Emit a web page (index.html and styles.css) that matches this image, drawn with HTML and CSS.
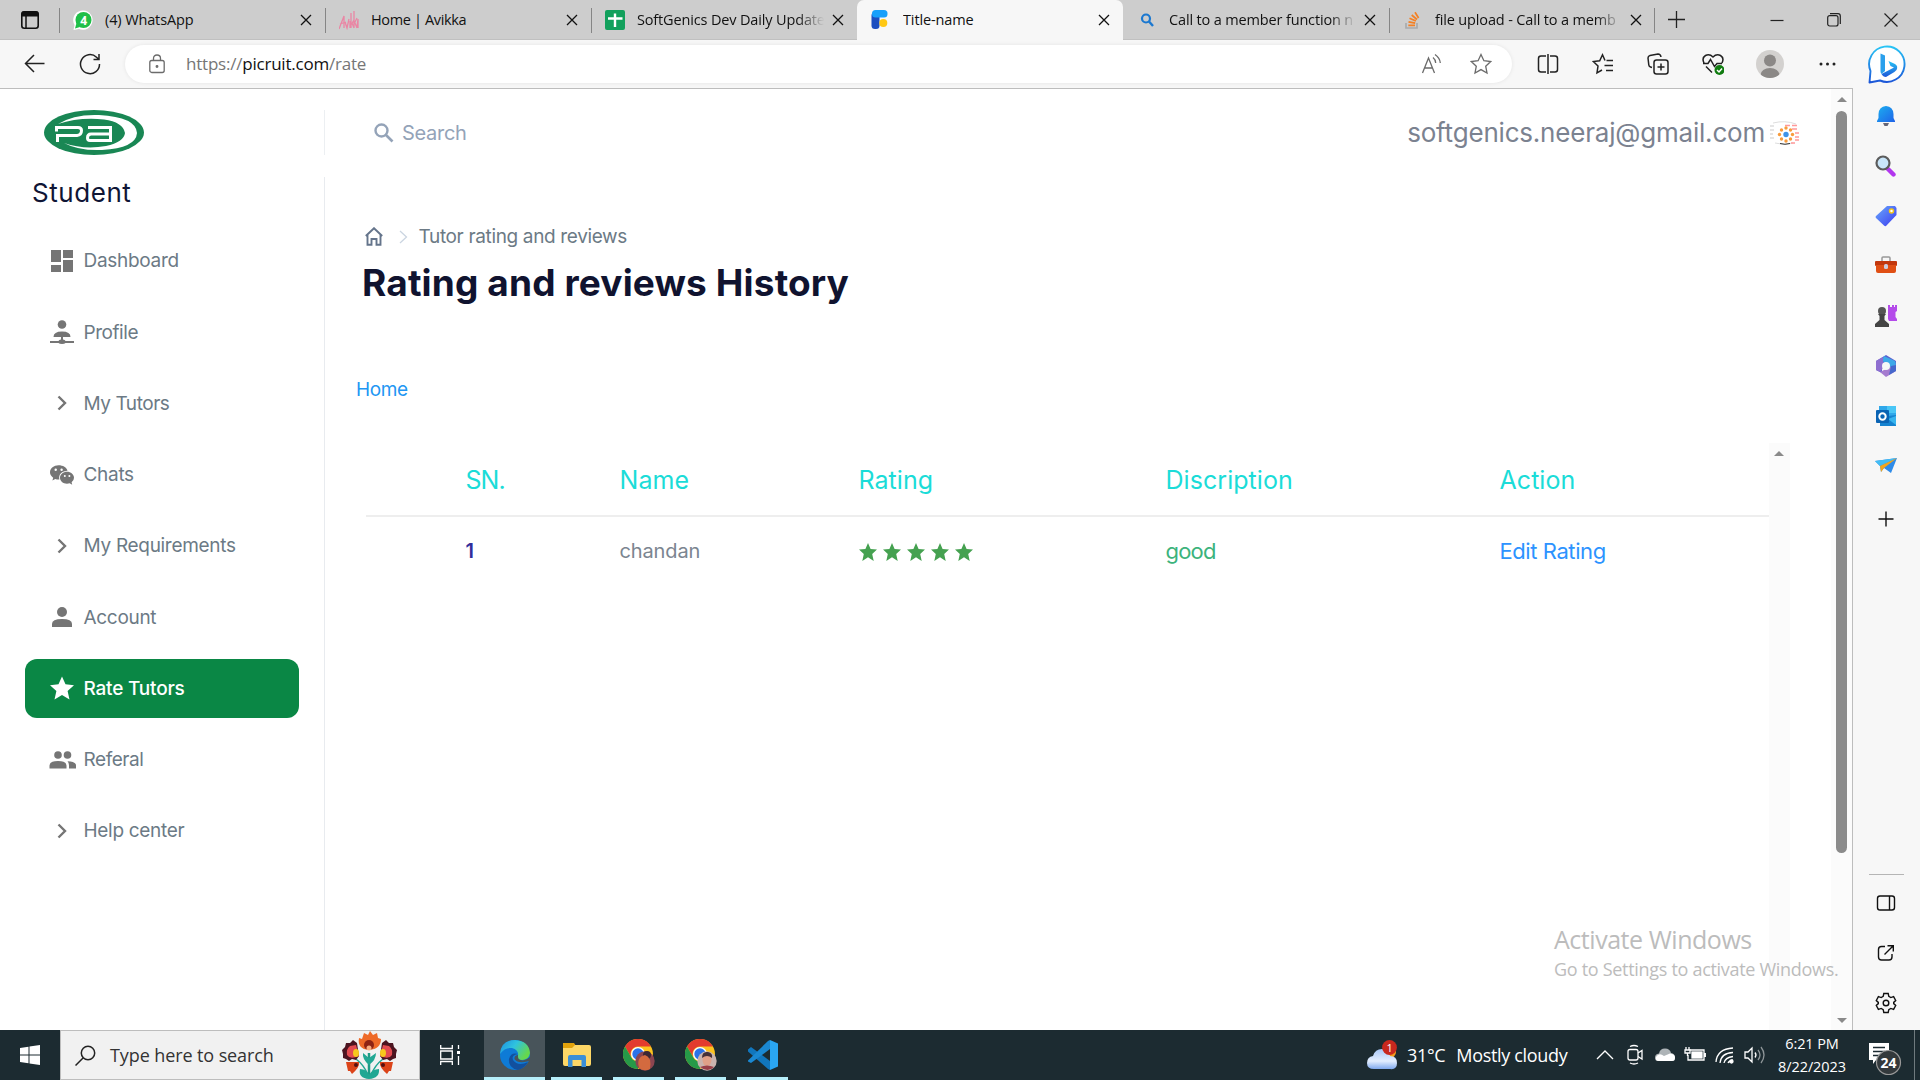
FILE: index.html
```html
<!DOCTYPE html>
<html lang="en">
<head>
<meta charset="utf-8">
<title>Title-name</title>
<link rel="stylesheet" href="styles.css">
</head>
<body>
<div class="desktop">
  <header class="tabs">
    <div class="tab-menu"><svg width="20" height="20" viewBox="0 0 20 20"><rect x="1.8" y="1.8" width="16.4" height="16.4" rx="2.5" fill="none" stroke="#111" stroke-width="1.6"/><path d="M1.5 6.5V3.5Q1.5 1.2 4 1.2H16Q18.5 1.2 18.5 3.5V6.5Z" fill="#111"/><path d="M6 6V18" stroke="#111" stroke-width="1.5"/></svg></div>
    <div class="tab">
      <svg class="favicon" viewBox="0 0 20 20"><path d="M0.500 20L1.500 15A9.700 9.700 0 1 1 6 19Z" fill="#fff"/><circle cx="10.5" cy="10" r="8" fill="#1fbf48"/><path d="M2 18.5L3.5 13L7 17Z" fill="#1fbf48"/><text x="10.5" y="14.500" text-anchor="middle" class="wa-count">4</text></svg>
      <span class="tab-title">(4) WhatsApp</span><svg class="close" viewBox="0 0 12 12"><path d="M1 1L11 11M11 1L1 11"/></svg>
    </div>
    <div class="tab">
      <svg class="favicon" viewBox="0 0 20 20"><path d="M0 19L5 6L5 18M1 14L7 12M6 12L8 18L10 9M11 11V18M12 18V3M12 15L15 10M13 13L15 18M15 18V1M15 14L18 8M16 13L18 18M18 17L19 9V18" fill="none" stroke="#ea86a4" stroke-width="1.3"/></svg>
      <span class="tab-title tight">Home | Avikka</span><svg class="close" viewBox="0 0 12 12"><path d="M1 1L11 11M11 1L1 11"/></svg>
    </div>
    <div class="tab">
      <svg class="favicon" viewBox="0 0 20 20"><rect width="20" height="20" rx="2" fill="#12a05c"/><path d="M10 3.5V17M3 8.5H17.5" stroke="#fff" stroke-width="2.4"/></svg>
      <span class="tab-title fade">SoftGenics Dev Daily Update</span><svg class="close" viewBox="0 0 12 12"><path d="M1 1L11 11M11 1L1 11"/></svg>
    </div>
    <div class="tab active">
      <svg class="favicon" viewBox="0 0 20 20"><rect x="0.5" y="2" width="8" height="17" rx="3.5" fill="#1d4fc0"/><rect x="1" y="0" width="15.5" height="7.5" rx="3.5" fill="#18a0fb"/><circle cx="12.3" cy="13" r="4" fill="#ffc814"/></svg>
      <span class="tab-title">Title-name</span><svg class="close" viewBox="0 0 12 12"><path d="M1 1L11 11M11 1L1 11"/></svg>
    </div>
    <div class="tab">
      <svg class="favicon" viewBox="0 0 20 20"><circle cx="9" cy="8.5" r="4" fill="none" stroke="#1b78d0" stroke-width="2.2"/><path d="M12 11.5L16 16" stroke="#1b78d0" stroke-width="2.4"/></svg>
      <span class="tab-title fade">Call to a member function n</span><svg class="close" viewBox="0 0 12 12"><path d="M1 1L11 11M11 1L1 11"/></svg>
    </div>
    <div class="tab last">
      <svg class="favicon" viewBox="0 0 20 20"><path d="M3 13V18H14V13" fill="none" stroke="#a9abad" stroke-width="1.7"/><path d="M5.3 15.3H12M5.5 11.8L12.2 13.2M6.5 8.2L12.9 11M8.7 5L14 9.5M12 2.2L15.6 8" stroke="#f48024" stroke-width="1.7"/></svg>
      <span class="tab-title fade">file upload - Call to a memb</span><svg class="close" viewBox="0 0 12 12"><path d="M1 1L11 11M11 1L1 11"/></svg>
    </div>
    <svg class="new-tab" viewBox="0 0 17 17"><path d="M8.5 0V17M0 8.5H17"/></svg>
    <div class="window-controls">
      <svg viewBox="0 0 14 14"><path d="M0.5 7.5H13.5"/></svg>
      <svg viewBox="0 0 14 14"><rect x="0.7" y="2.7" width="10.3" height="10.3" rx="2"/><path d="M3 0.7H11Q13.3 0.7 13.3 3V11"/></svg>
      <svg viewBox="0 0 14 14"><path d="M0.5 0.5L13.5 13.5M13.5 0.5L0.5 13.5"/></svg>
    </div>
  </header>

  <div class="toolbar">
    <div class="nav-btn"><svg width="22" height="20" viewBox="0 0 22 20"><path d="M21.500 9.5H2.500M11 1L2.500 9.5L11 18"/></svg></div>
    <div class="nav-btn"><svg width="22" height="22" viewBox="0 0 22 22"><path d="M20.5 11A9.5 9.5 0 1 1 17.5 4.2L19.5 6M20 1V6.5H14.5"/></svg></div>
    <div class="address">
      <svg class="lock" width="18" height="20" viewBox="0 0 18 20"><rect x="1.8" y="6.5" width="14.4" height="12" rx="2"/><path d="M5.5 6.5V4.5Q5.5 1 9 1T12.5 4.5V6.5"/><circle cx="9" cy="12.5" r="0.8"/></svg>
      <span class="url">https://<b>picruit.com</b>/rate</span>
      <div class="field-icon"><svg width="22" height="22" viewBox="0 0 22 22"><path d="M2.500 20L8.500 5L14.500 20M4.500 15H12.500M13 4.5Q15.500 6.5 15.700 10M15 1.5Q20 5 20.300 10"/></svg></div>
      <div class="field-icon"><svg width="22" height="22" viewBox="0 0 22 22"><path d="M11 1.5L13.9 7.7L20.7 8.5L15.7 13.2L17 20L11 16.6L5 20L6.3 13.2L1.3 8.5L8.1 7.7Z"/></svg></div>
    </div>
    <div class="tools">
      <div><svg viewBox="0 0 22 22"><path d="M9 3H4Q1.5 3 1.5 5.5V16.5Q1.5 19 4 19H9M13 3H18Q20.5 3 20.5 5.5V16.5Q20.5 19 18 19H13M11 1V21"/></svg></div>
      <div><svg viewBox="0 0 22 22"><path d="M13 7.5L10.5 1.8L7.7 7.7L1.3 8.5L6 13L5 19.8L10 17M14.5 7.5H21M12.5 12.5H21M14 17.5H21"/></svg></div>
      <div><svg viewBox="0 0 22 22"><path d="M5 14.5L3.5 14Q2 13.5 1.8 12L1 5Q1 3 3 2.5L11 1Q13.5 1 14 4"/><rect x="7" y="7" width="14" height="14" rx="2.5"/><path d="M14 10.5V17.5M10.5 14H17.5"/></svg></div>
      <div><svg viewBox="0 0 22 22"><path d="M2 10Q-0.5 5 3.5 2.5Q7.5 0.5 11 4Q14.5 0.5 18.5 2.5Q22.5 5 20 10M1 10.5H6L8.5 6.5L12.5 13.5L15 10.5H20M4 13.5L10 19.5"/><circle cx="17.5" cy="17" r="5" class="ok"/><path class="tick" d="M15 17L17 19L20 15.5"/></svg></div>
      <div class="wide"><svg class="person" viewBox="0 0 28 28"><clipPath id="pc"><circle cx="14" cy="14" r="14"/></clipPath><g clip-path="url(#pc)"><rect width="28" height="28" fill="#d3d1cf"/><circle cx="14" cy="10.5" r="6" fill="#8b8886"/><ellipse cx="14" cy="25" rx="9.5" ry="7" fill="#8b8886"/></g></svg></div>
      <div><svg viewBox="0 0 22 22"><g fill="#222" stroke="none"><circle cx="4" cy="11" r="1.5"/><circle cx="10.500" cy="11" r="1.5"/><circle cx="17" cy="11" r="1.5"/></g></svg></div>
      <div class="bing-slot"><svg class="bing" viewBox="0 0 40 40"><defs><linearGradient id="bg" x1="0" y1="0" x2="0" y2="1"><stop offset="0" stop-color="#28c4f5"/><stop offset="1" stop-color="#1c56d8"/></linearGradient></defs><path d="M2.500 38.500L3.500 27A17.700 17.700 0 1 1 13 36.500Z" fill="#fff" stroke="url(#bg)" stroke-width="1.9" stroke-linejoin="round"/><path d="M13.500 9.500L18 11.500V27L14.500 30Q13.500 29 13.500 27Z" fill="#2aa0ec"/><path d="M14.500 30L27 23.500L23.500 22L21.500 17L28 20Q31.500 22 29.500 26Q28 28 24 30L19 33Q16 33 14.500 30Z" fill="url(#bg)"/></svg></div>
    </div>
  </div>

  <div class="middle">
    <div class="page">
      <aside class="side">
        <div class="brand">
          <svg width="100" height="45" viewBox="0 0 100 45"><ellipse cx="50" cy="22.5" rx="50" ry="22.5" fill="#198754"/><path d="M14 14Q30 4 55 5Q92 7 93 23Q92 38 58 40Q35 41 20 33Q40 40 62 36Q80 32 81 23Q79 12 60 9.500Q35 7 14 14Z" fill="#fff"/><g fill="none" stroke="#fff" stroke-width="3"><path d="M12.500 21.500V17.500H34Q37.500 17.500 37.500 20.500Q37.500 25 33 25.500H13.500V32"/><path d="M44 17.500H66.500V30.500H46Q43.500 30.500 43.500 28Q43.500 24 47 24H66"/></g></svg>
        </div>
        <div class="menu-wrap">
          <h2 class="role">Student</h2>
          <nav class="menu">
            <a><svg viewBox="0 0 24 24"><path d="M1 1h10v12H1zM13 1h10v8H13zM13 11h10v12H13zM1 16h10v7H1z"/></svg><span>Dashboard</span></a>
            <a><svg viewBox="0 0 24 24"><circle cx="12" cy="4.5" r="4.3"/><path d="M3.5 17Q3.5 11.5 12 11.5T20.5 17ZM0 21H8.5Q9 19.5 11 19.5V17H13V19.5Q15 19.5 15.5 21H24V23H15.5Q14.5 24 12 24T8.500 23H0Z"/></svg><span class="tight">Profile</span></a>
            <a><svg viewBox="0 0 24 24"><path class="chev" d="M8.500 5.500L15 12L8.500 18.500"/></svg><span class="tight">My Tutors</span></a>
            <a><svg viewBox="0 0 24 24"><path d="M8.500 2.300C4 2.300 0 5.300 0 9.300 0 11.600 1.300 13.400 3.200 14.700L2.400 17.500L5.300 16Q7.300 16.700 9.400 16.500C8.200 11.500 12 7.800 17.500 7.800 16.700 4.500 13 2.300 8.500 2.300Z"/><path d="M24 14.800C24 11.500 20.800 8.800 17 8.800S10 11.500 10 14.800 13 20.700 17 20.700Q18.500 20.700 19.700 20.300L22.200 21.700L21.600 19.300Q24 17.500 24 14.800Z"/><g fill="#fff"><circle cx="5.700" cy="6.800" r="1.200"/><circle cx="11.600" cy="6.800" r="1.200"/><circle cx="14.800" cy="13" r="1"/><circle cx="19.400" cy="13" r="1"/></g></svg><span>Chats</span></a>
            <a><svg viewBox="0 0 24 24"><path class="chev" d="M8.500 5.500L15 12L8.500 18.500"/></svg><span>My Requirements</span></a>
            <a><svg viewBox="0 0 24 24"><circle cx="12" cy="7" r="5"/><path d="M2 22V19Q2 14 12 14T22 19V22Z"/></svg><span>Account</span></a>
            <a class="current"><svg viewBox="0 0 24 24"><path d="M12 0.500L15.500 8.300L24 9.200L17.600 14.900L19.500 23.500L12 19L4.500 23.500L6.400 14.900L0 9.200L8.500 8.300Z"/></svg><span>Rate Tutors</span></a>
            <a><svg class="big" viewBox="0 0 27 24"><circle cx="9" cy="7" r="3.800"/><circle cx="18.500" cy="7" r="3.800"/><path d="M0.500 20.500V17.500Q0.500 13 9 13T17.500 17.500V20.500ZM18.500 13.200Q27 13.500 27 17.500V20.500H20V17.500Q20 15 18.500 13.200Z"/></svg><span class="tight">Referal</span></a>
            <a><svg viewBox="0 0 24 24"><path class="chev" d="M8.500 5.500L15 12L8.500 18.500"/></svg><span>Help center</span></a>
          </nav>
        </div>
      </aside>
      <main class="content">
        <div class="topbar">
          <svg class="search-icon" viewBox="0 0 20 20"><circle cx="7.500" cy="7.500" r="6" fill="none" stroke="#94a3b8" stroke-width="2.400"/><path d="M12 12L18.500 18.500" stroke="#94a3b8" stroke-width="2.600"/></svg>
          <span class="search">Search</span>
          <span class="email">softgenics.neeraj@gmail.com</span>
          <svg class="avatar" viewBox="0 0 35 24"><path d="M4 2Q16-1 27 3M6 22Q16 25 24 22" fill="none" stroke="#ddd" stroke-width="1"/><path d="M11 22.500Q16 24 21 22.500" stroke="#333" fill="none"/><path d="M1 5h4M1 9h4M1 13h3M1 17h4" stroke="#ddd" stroke-width="1.500"/><path d="M16 4.500h5M23 4.500h5M23 8h5M26 12h4M26 16h4M26 19h4M22 22h4" stroke="#f99" stroke-width="1.700"/><g fill="#f89b3c"><circle cx="17" cy="7" r="1.700"/><circle cx="21.500" cy="9" r="1.700"/><circle cx="23.500" cy="13.500" r="1.700"/><circle cx="21.500" cy="18" r="1.700"/><circle cx="17" cy="20" r="1.700"/><circle cx="12.500" cy="18" r="1.700"/><circle cx="10.500" cy="13.500" r="1.700"/><circle cx="12.500" cy="9" r="1.700"/></g><circle cx="17" cy="13.500" r="2.700" fill="#3f93e8"/></svg>
        </div>
        <div class="crumbs">
          <svg width="18" height="19" viewBox="0 0 18 19"><path d="M0.800 9L9 1.200L17.200 9M2.500 8V17.800H6.500V12H11.500V17.800H15.500V8" fill="none" stroke="#64748b" stroke-width="1.900"/></svg>
          <svg width="9" height="14" viewBox="0 0 9 14"><path d="M1 1L7.500 7L1 13" fill="none" stroke="#cbd5e1" stroke-width="1.300"/></svg>
          <span>Tutor rating and reviews</span>
        </div>
        <h1>Rating and reviews History</h1>
        <a class="home-link">Home</a>
        <div class="table-wrap">
          <div class="table">
            <div class="row head"><span class="col-sn">SN.</span><span>Name</span><span>Rating</span><span>Discription</span><span>Action</span></div>
            <div class="row"><span class="sn">1</span><span class="name">chandan</span><span class="stars"><svg viewBox="0 0 18 18"><path d="M9 0L11.600 6L18 6.600L13.200 11L14.700 18L9 14.300L3.300 18L4.800 11L0 6.600L6.400 6Z"/></svg><svg viewBox="0 0 18 18"><path d="M9 0L11.600 6L18 6.600L13.200 11L14.700 18L9 14.300L3.300 18L4.800 11L0 6.600L6.400 6Z"/></svg><svg viewBox="0 0 18 18"><path d="M9 0L11.600 6L18 6.600L13.200 11L14.700 18L9 14.300L3.300 18L4.800 11L0 6.600L6.400 6Z"/></svg><svg viewBox="0 0 18 18"><path d="M9 0L11.600 6L18 6.600L13.200 11L14.700 18L9 14.300L3.300 18L4.800 11L0 6.600L6.400 6Z"/></svg><svg viewBox="0 0 18 18"><path d="M9 0L11.600 6L18 6.600L13.200 11L14.700 18L9 14.300L3.300 18L4.800 11L0 6.600L6.400 6Z"/></svg></span><span class="good">good</span><span class="edit">Edit Rating</span></div>
          </div>
          <div class="inner-scroll"><i class="up"></i></div>
        </div>
      </main>
      <div class="scrollbar"><i class="up"></i><div class="thumb"></div><i class="down"></i></div>
      <div class="watermark"><p class="wm-title">Activate Windows</p><p class="wm-sub">Go to Settings to activate Windows.</p></div>
    </div>
    <aside class="edge-side">
      <div class="apps">
        <svg viewBox="0 0 22 22"><defs><linearGradient id="bl" x1="0" y1="0" x2="1" y2="1"><stop offset="0" stop-color="#1cb0f0"/><stop offset="1" stop-color="#1f62e8"/></linearGradient></defs><path d="M11 1Q18 1.500 18.500 9V13L20 16V17H2V16L3.500 13V9Q4 1.500 11 1Z" fill="url(#bl)"/><path d="M8 18H14L12.500 21H9.500Z" fill="#667"/></svg>
        <svg viewBox="0 0 22 22"><path d="M13 14L18.500 19.500" stroke="#b236ee" stroke-width="4.400" stroke-linecap="round"/><circle cx="8" cy="8" r="6.500" fill="#c9e6fa" stroke="#5c5c5c" stroke-width="2.200"/></svg>
        <svg viewBox="0 0 22 22"><defs><linearGradient id="tg" x1="0" y1="0" x2="1" y2="1"><stop offset="0" stop-color="#68a9fb"/><stop offset="1" stop-color="#3d3bf0"/></linearGradient></defs><path d="M12 1H20L21.500 3V10L11 21Q10 21.500 9 20.500L1 13Q0 12 1 11Z" fill="url(#tg)"/><circle cx="16.500" cy="6" r="2" fill="#fff" stroke="#f5c518" stroke-width="1.500"/></svg>
        <svg viewBox="0 0 22 22"><path d="M7 6V3Q7 2 8 2H14Q15 2 15 3V6" fill="none" stroke="#999" stroke-width="1.500"/><rect x="0" y="6" width="22" height="5" rx="1" fill="#c2370d"/><path d="M1 10H21V16Q21 18 19 18H3Q1 18 1 16Z" fill="#e04f14"/><rect x="9" y="9" width="4" height="5" rx="1.500" fill="#ccd"/></svg>
        <svg viewBox="0 0 22 22"><path d="M13 0H15V2H17V0H19V2H20V0H22V6L20.500 7V12L22 14V16H14L13 14Z" fill="#b44bea"/><circle cx="7" cy="6" r="4" fill="#555"/><path d="M3 9H11L9.500 11V15L14 19V22H0V19L4.500 15V11Z" fill="#444"/></svg>
        <svg viewBox="0 0 22 22"><path d="M11 0L21 6V10H14L11 7L7 10V18L1 15V6Z" fill="#5b62cf"/><path d="M9 1L20 6Q21 8 21 11L14 13V9L7 6Z" fill="#3ea9e8"/><path d="M1 6L8 2V13L5 17L1 15Z" fill="#8f6fd0"/><path d="M5 17L15 12L21 10V16L11 22Z" fill="#a57bcf"/><path d="M16 11L21 10V16L14 20Z" fill="#4668cc"/><circle cx="11" cy="11" r="4" fill="#f7f7f7"/></svg>
        <svg viewBox="0 0 22 22"><rect x="4" y="1" width="17" height="12" fill="#2fa8ea"/><rect x="12" y="1" width="9" height="7" fill="#49c6f6"/><path d="M5 12L21 10V21H5Z" fill="#1583d0"/><path d="M13 14L21 20V11Z" fill="#36b4ee"/><rect x="1" y="5" width="13" height="13" rx="1" fill="#0a64b4"/><circle cx="7.500" cy="11.500" r="3.200" fill="none" stroke="#fff" stroke-width="2"/></svg>
        <svg viewBox="0 0 22 22"><path d="M0 6L22 3L16 18L9 13L6 17L5 11Z" fill="#2f8be8"/><path d="M0 6L22 3L5 11Z" fill="#42bdf4"/><path d="M22 3L9 13L6 17L5 11Z" fill="#f3a51b"/></svg>
      </div>
      <svg class="plus" viewBox="0 0 16 16"><path d="M8 0.500V15.500M0.500 8H15.500"/></svg>
      <div class="side-tools">
        <svg viewBox="0 0 22 22"><rect x="2.500" y="4" width="17" height="14" rx="2.500"/><path d="M14.500 4V18"/></svg>
        <svg viewBox="0 0 22 22"><path d="M10 4.500H6.500Q3.500 4.500 3.500 7.500V15Q3.500 18 6.500 18H14Q17 18 17 15V12M9.500 12.500L18 4M12.500 3.700H18.300V9.500"/></svg>
        <svg viewBox="0 0 22 22"><path d="M8.800 1.500H13.200L13.800 4.400L15.800 5.600L18.600 4.700L20.700 8.500L18.700 10.400V11.600L20.700 13.500L18.600 17.300L15.800 16.400L13.800 17.600L13.200 20.500H8.800L8.200 17.600L6.200 16.400L3.400 17.300L1.300 13.500L3.300 11.600V10.400L1.300 8.500L3.400 4.700L6.200 5.600L8.200 4.400Z"/><circle cx="11" cy="11" r="2.800"/></svg>
      </div>
    </aside>
  </div>

  <footer class="taskbar">
    <div class="start"><svg width="20" height="20" viewBox="0 0 20 20"><path d="M0 3L8.500 1.700V9.500H0ZM9.500 1.500L20 0V9.500H9.500ZM0 10.500H8.500V18.300L0 17ZM9.500 10.500H20V20L9.500 18.500Z" fill="#fff"/></svg></div>
    <div class="find">
      <svg width="21" height="21" viewBox="0 0 21 21"><circle cx="13" cy="8" r="6.700" fill="none" stroke="#222" stroke-width="1.500"/><path d="M8.300 12.700L0.500 20.500" stroke="#222" stroke-width="1.500"/></svg>
      <span>Type here to search</span>
      <svg class="flower" viewBox="0 0 55 48"><path d="M27 22V47" stroke="#1f9b86" stroke-width="2.500"/><path d="M27 48Q16 47 18 38Q25 38 27 44Q30 38 37 38Q38 47 27 48ZM27 34Q20 28 21 22L27 27L34 22Q34 29 27 34Z" fill="#21a793"/><path d="M14 28Q22 34 26 44M41 28Q33 34 29 44" fill="none" stroke="#21a793" stroke-width="1.500"/><path d="M27 19Q15 18 17 7L20 8L22 2L26 4L28 0L31 4L35 2L36 7L39 8Q39 18 27 19Z" fill="#ee6a28"/><circle cx="27" cy="14" r="5" fill="#8e2414"/><circle cx="27" cy="17" r="2.500" fill="#f7ad80"/><path d="M17 25L14 29L10 28L7 30L4 28L1 27L1 23L0 19L3 16L4 12L8 12L11 9L15 12ZM38 25L41 29L45 28L48 30L51 28L54 27L54 23L55 19L52 16L51 12L47 12L44 9L40 12Z" fill="#4c1420"/><path d="M17 25Q8 29 5 24Q4 18 8 15L14 14ZM38 25Q47 29 50 24Q51 18 47 15L41 14Z" fill="#e44b50"/><ellipse cx="14" cy="22" rx="3" ry="4" fill="#f8c81c"/><ellipse cx="41" cy="22" rx="3" ry="4" fill="#f8c81c"/><path d="M4 31L17 31Q18 36 10 43L8 40L6 40ZM51 31L38 31Q37 36 45 43L47 40L49 40Z" fill="#dc4419"/><circle cx="14" cy="34" r="2" fill="#511"/><circle cx="41" cy="34" r="2" fill="#511"/></svg>
    </div>
    <div class="task-view"><svg width="20" height="20" viewBox="0 0 20 20"><path d="M0.700 0V3.500H12.300V0M0.700 6H12.300V14H0.700ZM0.700 20V16.500H12.300V20M18.500 0V4M18.500 11V20" fill="none" stroke="#fff" stroke-width="1.300"/><rect x="17" y="6" width="3" height="3" fill="#fff"/></svg></div>
    <div class="apps-row">
      <div class="app focus"><svg width="30" height="30" viewBox="0 0 30 30"><defs><linearGradient id="eg" x1="0" y1="0" x2="1" y2="0.500"><stop offset="0" stop-color="#1d8ee0"/><stop offset="0.500" stop-color="#2fc3df"/><stop offset="1" stop-color="#66d84c"/></linearGradient></defs><circle cx="15" cy="15" r="15" fill="#0e7bd6"/><path d="M0 14Q1 0 15 0Q29 1 30 13Q29 20 22 20Q16 20 18 16Q19 10 12 8Q5 7 0 14Z" fill="url(#eg)"/><path d="M18 14Q11 15 13 20Q18 27 28 22Q25 28 18 30Q8 28 9 19Q11 12 18 14Z" fill="#12509e"/><path d="M18 15Q17 20 23 20.500Q27 20 30 17V21L27 21.500Q18 24 14.500 19Q14 15.500 18 15Z" fill="#48545a"/></svg></div>
      <div class="app"><svg width="28" height="24" viewBox="0 0 28 24"><path d="M0 0H11L13 3H24V8H0Z" fill="#e2a20b"/><path d="M0 5H9L12 2H26Q28 2 28 4V21Q28 23 26 23H2Q0 23 0 21Z" fill="#fdd766"/><path d="M5 24V14Q5 12 7 12H21Q23 12 23 14V24H18.500V17H9.500V24Z" fill="#3c8fd6"/></svg></div>
      <div class="app"><svg width="33" height="33" viewBox="0 0 33 33"><circle cx="15" cy="15" r="15" fill="#fcc31e"/><path d="M2 7.500A15 15 0 0 1 28 7.500H15A7.500 7.500 0 0 0 8.500 18.700Z" fill="#e33b2e"/><path d="M2 7.500L8.500 18.700A7.500 7.500 0 0 0 15 22.500L15 30A15 15 0 0 1 2 7.500Z" fill="#269a48"/><circle cx="15" cy="15" r="7" fill="#fff"/><circle cx="15" cy="15" r="5.700" fill="#2b73e8"/><circle cx="22" cy="22" r="9.700" fill="#8b4550"/><circle cx="24" cy="16" r="4" fill="#3b2735"/><path d="M16 29Q13 18 22 16Q29 18 27 30Q21 33 16 29Z" fill="#d36a3f"/></svg></div>
      <div class="app"><svg width="33" height="33" viewBox="0 0 33 33"><circle cx="15" cy="15" r="15" fill="#fcc31e"/><path d="M2 7.500A15 15 0 0 1 28 7.500H15A7.500 7.500 0 0 0 8.500 18.700Z" fill="#e33b2e"/><path d="M2 7.500L8.500 18.700A7.500 7.500 0 0 0 15 22.500L15 30A15 15 0 0 1 2 7.500Z" fill="#269a48"/><circle cx="15" cy="15" r="7" fill="#fff"/><circle cx="15" cy="15" r="5.700" fill="#2b73e8"/><circle cx="22" cy="22" r="9.700" fill="#c9b3ae"/><ellipse cx="22" cy="21" rx="4.500" ry="6" fill="#e0a088"/><path d="M17 19Q17 12 23 13Q28 14 27 19Q22 15 17 19Z" fill="#443039"/><path d="M15 28Q22 25 29 28Q23 34 15 28Z" fill="#9a3f48"/></svg></div>
      <div class="app"><svg width="30" height="30" viewBox="0 0 30 30"><path d="M0 9.500L3 7L22 21V30L20 29L0 11.500Z" fill="#1176bd"/><path d="M0 20.500L20 1L22 0V9L3 23L0 21.500Z" fill="#1a88d2"/><path d="M22 0L30 3.500V26.500L22 30Z" fill="#2aa6f2"/></svg></div>
    </div>
    <div class="weather">
      <svg width="30" height="30" viewBox="0 0 30 30"><defs><linearGradient id="cg" x1="0" y1="0" x2="0" y2="1"><stop offset="0" stop-color="#a9c8f8"/><stop offset="0.600" stop-color="#e3eeff"/><stop offset="1" stop-color="#7ea8ee"/></linearGradient></defs><circle cx="23" cy="12" r="6" fill="#f59b1a"/><path d="M7 29Q0 29 0 23T6 16Q8 9 15 9T23 16Q30 16 30 23T23 29Z" fill="url(#cg)"/><circle cx="22.500" cy="7.500" r="7.400" fill="#c8281e"/><text x="22.500" y="12" text-anchor="middle" class="alert">1</text></svg>
      <span class="temp">31°C</span><span>Mostly cloudy</span>
    </div>
    <div class="tray">
      <svg viewBox="0 0 22 22"><path d="M3 15L11 7L19 15"/></svg>
      <svg viewBox="0 0 22 22"><rect x="4" y="5.500" width="10" height="10.500" rx="2"/><path d="M14 9L18 6.500V15L14 12.500M6 2.500Q10 0.500 14 2.500M6 19Q10 21 14 19"/></svg>
      <svg viewBox="0 0 22 22"><path d="M4 17Q1 17 1 13.500T5 9.500Q6 4.500 11 4.500T17 9Q21 9.500 21 13.500T18 17Z" fill="#aeb4b7" stroke="none"/><path d="M4 17Q1 16 2 13Q5 8 10 12L16 9.500Q21 10 21 13.500T18 17Z" fill="#fff" stroke="none"/></svg>
      <svg viewBox="0 0 22 22"><path d="M6 6H20V16H4V11M21.300 9V13"/><rect x="8" y="8" width="10" height="6" fill="#fff"/><path d="M2 3V6M5 3V6M1 6H6V9H1ZM3.500 9V12"/></svg>
      <svg viewBox="0 0 22 22"><path d="M2 18Q3 5 19 4M6 19Q7 9 19 8.500M10 19Q11 13.500 19 12.500M14 19Q15 17 19 16"/><circle cx="17.500" cy="17.500" r="1.500" fill="#fff"/></svg>
      <svg viewBox="0 0 22 22"><path d="M1 8H4L8 4V18L4 14H1ZM11 8.500Q13 11 11 13.500"/><path d="M14 6Q18 11 14 16M17 3Q23 11 17 19" opacity=".5"/></svg>
    </div>
    <div class="clock"><span>6:21 PM</span><span>8/22/2023</span></div>
    <div class="notif"><svg width="34" height="34" viewBox="0 0 34 34"><path d="M1 1H21V18H8L5 22V18H1Z" fill="#fff"/><path d="M5 5.500H17M5 9.500H17M5 13.500H11" stroke="#1c2b31" stroke-width="1.300"/><circle cx="20.500" cy="20.500" r="12" fill="#33393c" stroke="#999" stroke-width="1.200"/><text x="20.500" y="26" text-anchor="middle" class="badge">24</text></svg></div>
    <div class="show-desktop"></div>
  </footer>
</div>
</body>
</html>
```
FILE: styles.css
```css
* { box-sizing: border-box; }
body { margin: 0; overflow: hidden; font-family: "Open Sans", "Noto Sans", sans-serif; color: #111; }
h1, h2, p { margin: 0; font-weight: 400; }
i { font-style: normal; }
span { white-space: nowrap; }
svg { display: block; flex: none; }
.desktop { width: 1920px; height: 1080px; display: flex; flex-direction: column; background: #fff; }

/* tab strip */
.tabs { height: 40px; display: flex; align-items: center; background: #cdcdcd; border-bottom: 1px solid #c0c0c0; font-size: 14.5px; letter-spacing: -0.12px; }
.tab-menu { width: 59px; padding-left: 20px; }
.tab { width: 266px; height: 40px; display: flex; align-items: center; padding: 0 13px 0 14px; position: relative; }
.tab::before { content: ""; position: absolute; left: 0; top: 8px; width: 1px; height: 25px; background: #858585; }
.favicon { width: 20px; height: 20px; margin-right: 12px; }
.tab-title { flex: 1; overflow: hidden; min-width: 0; }
.tab-title.tight { letter-spacing: -0.35px; }
.fade { margin-right: 8px; -webkit-mask-image: linear-gradient(90deg, #000 86%, transparent 100%); mask-image: linear-gradient(90deg, #000 86%, transparent 100%); }
.fade { letter-spacing: -0.15px; }
.close { width: 12px; height: 12px; fill: none; stroke: #111; stroke-width: 1.3; }
.tab.active { background: #f7f7f7; border-radius: 7px 7px 0 0; }
.tab.active::before, .tab.active + .tab::before { display: none; }
.tab.last::after { content: ""; position: absolute; right: 0; top: 8px; width: 1px; height: 25px; background: #858585; }
.wa-count { font: 700 12px "Open Sans", sans-serif; fill: #fff; }
.new-tab { width: 17px; height: 17px; margin-left: 13px; stroke: #222; stroke-width: 1.3; }
.window-controls { margin-left: auto; display: flex; gap: 43px; padding-right: 22px; }
.window-controls svg { width: 14px; height: 14px; fill: none; stroke: #222; stroke-width: 1.2; }

/* toolbar */
.toolbar { height: 48px; background: #f7f7f7; display: flex; align-items: center; padding-left: 6px; }
.toolbar svg { fill: none; stroke: #222; stroke-width: 1.5; }
.nav-btn { width: 56px; display: flex; justify-content: center; }
.address { width: 1387px; height: 38px; margin-left: 7px; border-radius: 19px; background: #fff; display: flex; align-items: center; padding: 0 6px 0 23px; box-shadow: 0 0 4px rgba(0,0,0,.08); }
.address svg { stroke: #6b6b6b; stroke-width: 1.3; }
.lock { margin-right: 20px; }
.url { font-size: 17px; letter-spacing: -0.22px; padding-bottom: 2px; color: #767676; margin-right: auto; }
.url b { font-weight: 400; color: #111; }
.field-icon { width: 50px; display: flex; justify-content: center; }
.tools { display: flex; margin-left: 8px; align-items: center; }
.tools div { width: 55px; display: flex; justify-content: center; }
.tools svg { width: 22px; height: 22px; }
.tools .wide { width: 60px; }
.tools .person { width: 28px; height: 28px; stroke: none; }
.tools .bing-slot { width: 64px; }
.tools .bing { width: 40px; height: 40px; stroke: none; }
.tools .ok { fill: #107c10; stroke: none; }
.tools .tick { stroke: #fff; }

/* web page */
.middle { height: 942px; display: flex; }
.page { width: 1853px; display: flex; position: relative; border-top: 1px solid #bdbdbd; border-right: 1px solid #bdbdbd; font-family: Inter, "Open Sans", sans-serif; background: #fff; }
.side { width: 325px; padding-top: 21px; display: flex; flex-direction: column; }
.brand { height: 45px; padding-left: 44px; border-right: 1px solid #eceff2; }
.menu-wrap { flex: 1; margin-top: 22px; border-right: 1px solid #e8ebef; }
.role { font-size: 26px; line-height: 32px; letter-spacing: 0.55px; padding-left: 32px; color: #0f1535; }
.menu { display: flex; flex-direction: column; gap: 12.25px; padding: 22.4px 25px 0; font-size: 19px; letter-spacing: -0.3px; color: #6c7a85; }
.menu a { height: 59px; border-radius: 12px; padding-left: 25px; display: flex; align-items: center; gap: 9.5px; fill: #757575; }
.menu .tight { letter-spacing: -0.45px; }
.menu svg { width: 24px; height: 24px; }
.menu .big { width: 27px; margin: 0 -1.5px; }
.chev { fill: none; stroke: #757575; stroke-width: 2.4; }
.menu .current { background: #0a8745; color: #fff; font-weight: 500; fill: #fff; letter-spacing: -0.2px; }
.content { width: 1506px; display: flex; flex-direction: column; }
.topbar { height: 45px; margin-top: 21px; padding: 0 27px 0 49px; display: flex; align-items: center; }
.search-icon { width: 20px; height: 20px; margin-right: 8px; }
.search { font-size: 20px; letter-spacing: -0.3px; color: #94a3b8; }
.email { margin-left: auto; font-size: 26px; letter-spacing: -0.2px; color: #7b8290; padding-bottom: 1px; }
.avatar { width: 35px; height: 24px; margin-left: 4px; }
.crumbs { display: flex; align-items: center; margin-top: 69.5px; padding-left: 40px; height: 24px; font-size: 19px; letter-spacing: -0.35px; color: #6c7a85; }
.crumbs svg + svg { margin: 0 11px 0 15.5px; }
h1 { font-size: 37px; line-height: 44px; letter-spacing: 0.14px; font-weight: 700; padding-left: 37px; margin-top: 12px; color: #10132f; }
.home-link { font-size: 19px; line-height: 24px; letter-spacing: -0.4px; padding-left: 31px; margin-top: 73px; color: #2196f3; }
.table-wrap { flex: 1; margin-top: 41.5px; display: flex; padding-left: 41px; min-height: 0; }
.table { width: 1403px; }
.row { display: grid; grid-template-columns: 154px 239px 307px 334px 1fr; padding-left: 99.5px; align-items: center; height: 69px; font-size: 22px; }
.row.head { height: 74px; padding-top: 1px; border-bottom: 2px solid #eee; color: #1bdcd8; font-size: 25px; letter-spacing: 0.05px; }
.col-sn { letter-spacing: -1px; }
.sn { color: #312e9b; font-weight: 600; font-size: 20px; padding-bottom: 2px; }
.name { color: #7b8590; font-size: 20px; letter-spacing: -0.12px; padding-bottom: 2px; }
.stars { display: flex; gap: 6px; }
.stars svg { width: 18px; height: 18px; fill: #45a150; }
.good { color: #3cb37c; letter-spacing: -0.8px; padding-bottom: 1px; }
.edit { color: #2c93ff; letter-spacing: -0.42px; padding-bottom: 1px; }
.inner-scroll { width: 21px; background: #fbfbfb; padding: 8px 5px; }
.up, .down { display: block; width: 0; border: 5.5px solid transparent; }
.up { border-bottom-color: #8a8a8a; border-top: 0; }
.down { border-top-color: #8a8a8a; border-bottom: 0; }
.scrollbar { width: 21px; background: #fbfbfb; padding: 8px 0 7px; display: flex; flex-direction: column; align-items: center; }
.thumb { width: 11px; height: 742px; border-radius: 6px; background: #8b8b8b; margin: 9px 0 auto; }
.watermark { position: absolute; left: 1554px; top: 833px; color: #bcbcbc; font-family: "Open Sans", sans-serif; }
.wm-title { font-size: 25px; line-height: 34px; letter-spacing: -0.46px; }
.wm-sub { font-size: 18px; line-height: 26px; letter-spacing: -0.3px; }

/* browser side rail */
.edge-side { width: 67px; background: #f7f7f7; display: flex; flex-direction: column; align-items: center; padding: 16.500px 1px 0 0; }
.apps { display: flex; flex-direction: column; gap: 28px; }
.apps svg { width: 22px; height: 22px; }
.plus { width: 16px; height: 16px; margin-top: 34.500px; stroke: #111; stroke-width: 1.4; }
.side-tools { width: 35px; margin-top: auto; border-top: 1px solid #b5b5b5; padding: 17px 0 16px; display: flex; flex-direction: column; gap: 28px; align-items: center; }
.side-tools svg { width: 22px; height: 22px; fill: none; stroke: #111; stroke-width: 1.4; }

/* taskbar */
.taskbar { height: 50px; background: #1c2b31; display: flex; align-items: stretch; color: #fff; }
.taskbar > div { display: flex; align-items: center; }
.start { width: 60px; justify-content: center; }
.find { width: 360px; background: #f1f1f1; border: 1px solid #bdbdbd; color: #333; font-size: 18px; letter-spacing: -0.1px; padding-left: 14px; }
.find span { margin-left: 14px; }
.flower { width: 55px; height: 48px; margin-left: auto; margin-right: 22px; }
.task-view { width: 64px; padding-left: 20px; }
.app { width: 62px; height: 50px; display: flex; justify-content: center; align-items: center; position: relative; }
.app::after { content: ""; position: absolute; left: 5px; right: 6px; bottom: 0; height: 3px; background: #b6effb; }
.app.focus { width: 61px; margin-right: 1px; background: #48545a; }
.app.focus::after { left: 0; right: 0; }
.weather { margin-left: 573px; font-size: 18px; letter-spacing: -0.33px; }
.alert { font: 11px "Open Sans", sans-serif; fill: #fff; }
.temp { margin: 0 11px 0 10px; }
.tray { margin-left: auto; gap: 8px; }
.tray svg { width: 22px; height: 22px; fill: none; stroke: #fff; stroke-width: 1.3; }
.taskbar .clock { flex-direction: column; width: 92px; justify-content: center; font-size: 14.5px; letter-spacing: -0.1px; line-height: 23px; }
.notif { width: 56px; padding: 7px 0 0 10px; }
.badge { font: 700 14px "Open Sans", sans-serif; fill: #fff; }
.show-desktop { width: 6px; border-left: 1px solid #6f7a7e; }
```
